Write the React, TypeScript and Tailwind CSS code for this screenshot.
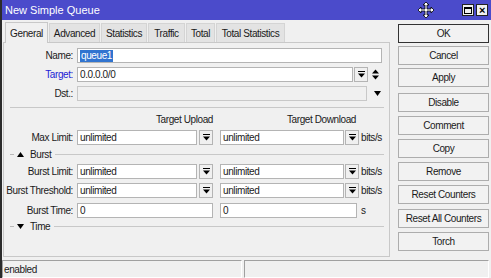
import React from 'react';

const font = "font-['Liberation_Sans',Arial,sans-serif] tracking-[-0.4px]";

// small "drop down" glyph: bar over a down triangle
const DropGlyph = () => (
  <svg width="7" height="7" viewBox="0 0 7 7">
    <rect x="0" y="0" width="7" height="1" fill="#000" />
    <path d="M0 2.5 H7 L3.5 6.5 Z" fill="#000" />
  </svg>
);

const DropButton = () => (
  <div className="w-[14px] h-[15px] border border-[#b4b4b4] bg-[#f0f0f0] flex items-center justify-center shrink-0">
    <DropGlyph />
  </div>
);

const Input = ({ value, w, disabled, selected }: { value?: string; w: number; disabled?: boolean; selected?: boolean }) => (
  <div
    className={`h-[15px] border border-[#b4b4b4] flex items-center px-[2px] shrink-0 text-[10px] leading-none ${
      disabled ? 'bg-[#f0f0f0] border-[#c8c8c8]' : 'bg-white'
    }`}
    style={{ width: w }}
  >
    {selected ? <span className="bg-[#3074d0] text-white px-[1px] py-[1px]">{value}</span> : <span className="text-[#1a1a1a]">{value}</span>}
  </div>
);

const Label = ({ text, blue }: { text: string; blue?: boolean }) => (
  <div className={`w-[69px] text-right text-[10px] leading-none whitespace-nowrap shrink-0 mr-[4px] ${blue ? 'text-[#1c1cd6]' : 'text-[#1a1a1a]'}`}>
    {text}
  </div>
);

const PairRow = ({ label, unit }: { label: string; unit: string }) => (
  <div className="flex items-center h-[15px]">
    <Label text={label} />
    <Input value="unlimited" w={120} />
    <div className="w-[2px]" />
    <DropButton />
    <div className="w-[7px]" />
    <Input value="unlimited" w={124} />
    <div className="w-[1px]" />
    <DropButton />
    <span className="ml-[2px] text-[10px] text-[#1a1a1a]">{unit}</span>
  </div>
);

const Section = ({ title, open }: { title: string; open: boolean }) => (
  <div className="flex items-center h-[11px] pl-[6px] pr-[5px]">
    <div className="w-[4px] h-px bg-[#b9b9b9]" />
    <svg width="7" height="5" viewBox="0 0 7 5" className="mx-[3px]">
      {open ? <path d="M0 5 H7 L3.5 0 Z" fill="#000" /> : <path d="M0 0 H7 L3.5 5 Z" fill="#000" />}
    </svg>
    <span className="text-[10px] text-[#1a1a1a] ml-[3px] mr-[4px]">{title}</span>
    <div className="flex-1 h-px bg-[#c8c8c8]" />
  </div>
);

const tabs: [string, number][] = [
  ['General', 43],
  ['Advanced', 51],
  ['Statistics', 46],
  ['Traffic', 37],
  ['Total', 29],
  ['Total Statistics', 69],
];

const buttons = [
  ['OK', 0],
  ['Cancel', 3],
  ['Apply', 3],
  ['Disable', 6],
  ['Comment', 4],
  ['Copy', 4],
  ['Remove', 4],
  ['Reset Counters', 4],
  ['Reset All Counters', 5],
  ['Torch', 4],
] as const;

export default function App() {
  return (
    <div className={`w-[491px] h-[278px] bg-[#f0f0f0] flex flex-col border-l-2 border-[#2b2b2b] overflow-hidden ${font}`}>
      {/* title bar */}
      <div className="h-[20px] bg-[#4b4bcb] flex items-center pl-[3px] pr-[3px] shrink-0">
        <span className="text-white text-[11px] tracking-normal">New Simple Queue</span>
        <div className="flex-1 flex justify-center pl-[290px]">
          <svg width="16" height="18" viewBox="0 0 16 18">
            <path d="M8 1 L11 4 H9 V8 H13 V6 L16 9 L13 12 V10 H9 V14 H11 L8 17 L5 14 H7 V10 H3 V12 L0 9 L3 6 V8 H7 V4 H5 Z" fill="#fff" stroke="#000" strokeWidth="0.8" />
          </svg>
        </div>
        <div className="flex gap-[2px]">
          <div className="w-[12px] h-[12px] bg-[#f0f0f0] border border-[#222] flex items-center justify-center">
            <div className="w-[8px] h-[7px] border border-[#000] border-t-2" />
          </div>
          <div className="w-[12px] h-[12px] bg-[#f0f0f0] border border-[#222] flex items-center justify-center text-[11px] font-bold leading-none">
            ×
          </div>
        </div>
      </div>

      {/* body */}
      <div className="flex flex-1 min-h-0">
        <div className="w-[387px] ml-[1px] flex flex-col">
          {/* tabs */}
          <div className="h-[22px] flex items-end pl-[2px] shrink-0 gap-[1px]">
            {tabs.map(([t, w], i) =>
              i === 0 ? (
                <div key={t} style={{ width: w }} className="h-[21px] bg-[#f0f0f0] border border-b-0 border-[#c8c8c8] text-[10px] flex items-center justify-center text-[#1a1a1a] relative -mb-px z-10">
                  {t}
                </div>
              ) : (
                <div key={t} style={{ width: w }} className="h-[19px] bg-[#e3e3e3] border border-b-0 border-[#d4d4d4] text-[10px] flex items-center justify-center text-[#1a1a1a] whitespace-nowrap">
                  {t}
                </div>
              )
            )}
          </div>

          {/* panel */}
          <div className="h-[215px] border border-[#c8c8c8] flex flex-col pt-[5px]">
            <div className="flex items-center h-[15px]">
              <Label text="Name:" />
              <Input value="queue1" w={305} selected />
            </div>
            <div className="flex items-center h-[15px] mt-[4px]">
              <Label text="Target:" blue />
              <Input value="0.0.0.0/0" w={276} />
              <div className="w-[1px]" />
              <DropButton />
              <svg width="7" height="11" viewBox="0 0 7 11" className="ml-[4px]">
                <path d="M0 4.5 H7 L3.5 0.5 Z" fill="#000" />
                <path d="M0 6.5 H7 L3.5 10.5 Z" fill="#000" />
              </svg>
            </div>
            <div className="flex items-center h-[15px] mt-[4px]">
              <Label text="Dst.:" />
              <Input w={290} disabled />
              <svg width="7" height="5" viewBox="0 0 7 5" className="ml-[7px]">
                <path d="M0 0 H7 L3.5 5 Z" fill="#000" />
              </svg>
            </div>

            <div className="h-px bg-[#c8c8c8] ml-[6px] mr-[5px] mt-[6px]" />

            <div className="flex h-[12px] mt-[7px] text-[10px] text-[#1a1a1a] leading-none">
              <div className="w-[209px] text-right">Target Upload</div>
              <div className="w-[143px] text-right">Target Download</div>
            </div>

            <div className="mt-[3px]">
              <PairRow label="Max Limit:" unit="bits/s" />
            </div>

            <div className="mt-[4px]">
              <Section title="Burst" open />
            </div>

            <div className="mt-[4px]">
              <PairRow label="Burst Limit:" unit="bits/s" />
            </div>
            <div className="mt-[4px]">
              <PairRow label="Burst Threshold:" unit="bits/s" />
            </div>
            <div className="flex items-center h-[15px] mt-[5px]">
              <Label text="Burst Time:" />
              <Input value="0" w={136} />
              <div className="w-[7px]" />
              <Input value="0" w={137} />
              <span className="ml-[4px] text-[10px] text-[#1a1a1a]">s</span>
            </div>

            <div className="mt-[3px]">
              <Section title="Time" open={false} />
            </div>
          </div>
        </div>

        {/* right buttons */}
        <div className="flex-1 flex flex-col pl-[8px] pr-[2px] pt-[4px]">
          {buttons.map(([b, gap], i) => (
            <div
              key={b}
              className={`h-[19px] border ${i === 0 ? 'border-[#333]' : 'border-[#adadad]'} bg-[#f2f2f2] text-[10px] text-[#1a1a1a] flex items-center justify-center shrink-0 whitespace-nowrap`}
              style={{ marginTop: gap }}
            >
              {b}
            </div>
          ))}
        </div>
      </div>

      {/* status bar */}
      <div className="h-[20px] flex gap-[2px] pt-[2px] pr-[2px] shrink-0">
        <div className="w-[240px] border-t border-l border-[#a0a0a0] border-b border-r border-b-white border-r-white text-[10px] text-[#1a1a1a] flex items-center pl-[1px]">
          enabled
        </div>
        <div className="flex-1 border-t border-l border-[#a0a0a0] border-b border-r border-b-white border-r-white" />
      </div>
    </div>
  );
}
